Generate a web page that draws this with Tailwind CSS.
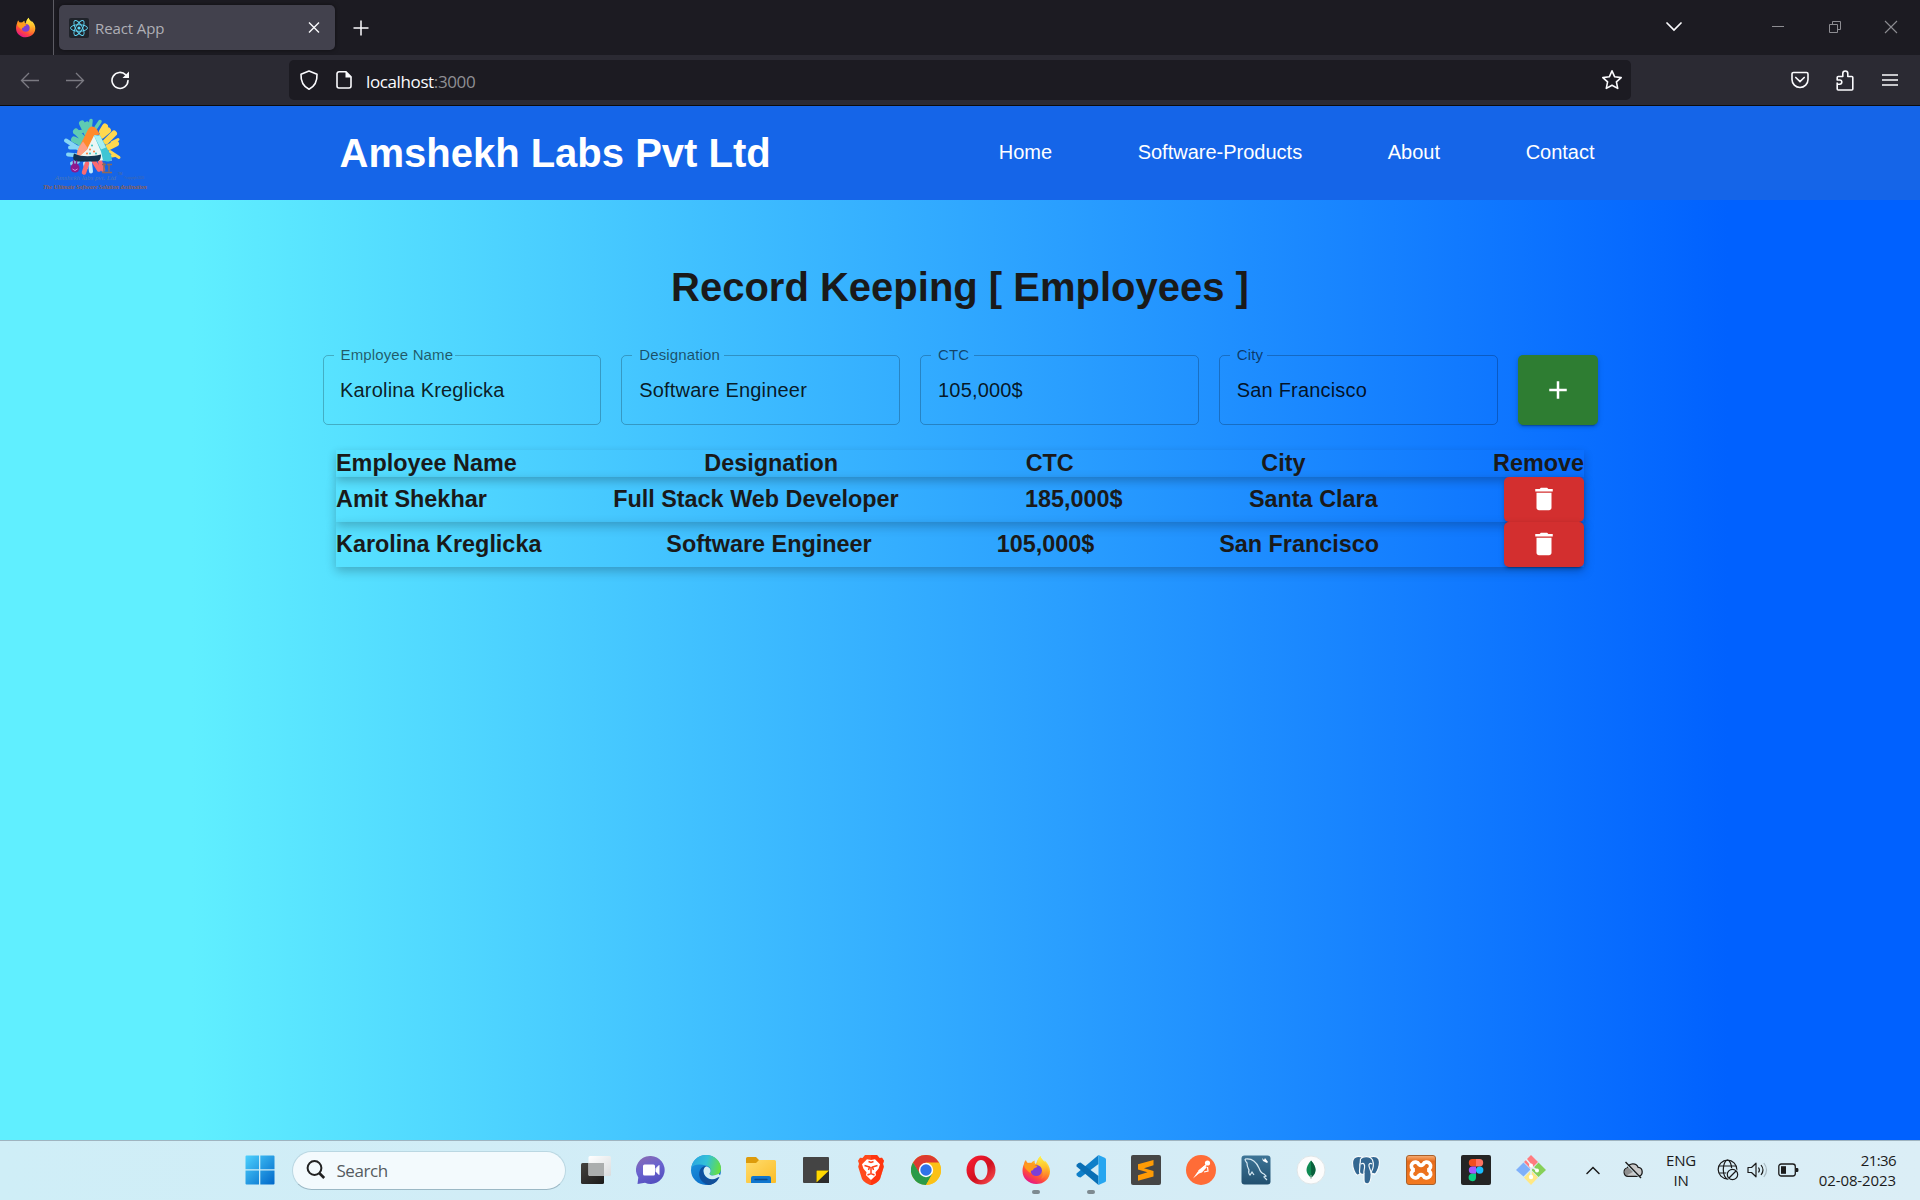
<!DOCTYPE html>
<html lang="en">
<head>
<meta charset="utf-8">
<title>React App</title>
<script src="https://cdn.jsdelivr.net/npm/@tailwindcss/browser@4"></script>
</head>
<body class="w-[1920px] h-[1200px] overflow-hidden flex flex-col font-['Liberation_Sans',Arial,sans-serif]">

<svg width="0" height="0" class="absolute" aria-hidden="true">
  <defs>
    <linearGradient id="ffBody" x1=".8" y1=".1" x2=".3" y2="1"><stop offset="0" stop-color="#fff44f"/><stop offset=".35" stop-color="#ffa21e"/><stop offset=".7" stop-color="#ff4a3d"/><stop offset="1" stop-color="#e3128c"/></linearGradient>
    <linearGradient id="ffFlame" x1=".5" y1="0" x2=".6" y2="1"><stop offset="0" stop-color="#fff04a"/><stop offset=".5" stop-color="#ffc12a"/><stop offset="1" stop-color="#ff6a33"/></linearGradient>
    <linearGradient id="win" x1="0" y1="0" x2="1" y2="1"><stop offset="0" stop-color="#4cd0fd"/><stop offset="1" stop-color="#0067c9"/></linearGradient>
    <linearGradient id="chat" x1=".1" y1="0" x2=".5" y2="1"><stop offset="0" stop-color="#8a6bb0"/><stop offset=".5" stop-color="#6a63cf"/><stop offset="1" stop-color="#5550c0"/></linearGradient>
    <linearGradient id="edgeTop" x1="0" y1=".3" x2="1" y2=".5"><stop offset="0" stop-color="#2aa5e0"/><stop offset=".5" stop-color="#33c1d8"/><stop offset="1" stop-color="#67e040"/></linearGradient>
    <linearGradient id="edgeLeft" x1="0" y1="0" x2=".6" y2="1"><stop offset="0" stop-color="#1f9ae0"/><stop offset="1" stop-color="#0a6cc8"/></linearGradient>
    <linearGradient id="folder" x1="0" y1="0" x2="1" y2="1"><stop offset="0" stop-color="#ffdc6e"/><stop offset="1" stop-color="#fbbd27"/></linearGradient>
    <linearGradient id="opera" x1="0" y1="0" x2="1" y2="1"><stop offset="0" stop-color="#ff1f35"/><stop offset=".55" stop-color="#d0101f"/><stop offset="1" stop-color="#ff5a5a"/></linearGradient>
    <linearGradient id="mysql" x1="0" y1="0" x2="0" y2="1"><stop offset="0" stop-color="#3e7597"/><stop offset="1" stop-color="#22506f"/></linearGradient>
    <linearGradient id="xampp" x1="0" y1="0" x2="0" y2="1"><stop offset="0" stop-color="#f8b078"/><stop offset=".2" stop-color="#e56b1b"/><stop offset="1" stop-color="#f47a20"/></linearGradient>
    <linearGradient id="dark" x1="0" y1="0" x2="1" y2="1"><stop offset="0" stop-color="#43423f"/><stop offset="1" stop-color="#1c1b1a"/></linearGradient>
    <linearGradient id="light" x1="0" y1="0" x2="1" y2="1"><stop offset="0" stop-color="#ffffff"/><stop offset="1" stop-color="#d9dcde"/></linearGradient>
    <symbol id="firefox" viewBox="0 0 30 30">
      <path d="M3.200 8.500C3.200 6.600 4.400 5.400 5 5c.3 1.400 1 2.300 2 3 .9-.4 2.500-.3 3.200 0 .8-1.300 2-2.200 3.600-2.600C13.300 7 13.800 8.400 15 9.200 16.200 6 17 3 19.600 1c0 2.400 2.200 4 3.800 6 .3-.6.3-1.200.2-1.800C27 8.500 29 12 29 16.200 29 24 22.800 29 15.300 29S1.500 23.500 1.500 16c0-3 .7-5.500 1.700-7.500z" fill="url(#ffBody)"/>
      <path d="M19.600 1c0 3.500 5.600 5 6.900 11.500.9 5-2 10-6.500 11.500 2-2.500 2.500-6 1-9-1.200-2.400-3.200-3.200-4.500-5.200C15.600 6.500 17.400 2.700 19.600 1z" fill="url(#ffFlame)"/>
      <circle cx="15.300" cy="15.500" r="5.600" fill="#7b3fd6"/>
      <path d="M3.500 8c2.500 1.500 5-.6 8.500.9 1.200.6 2 1.600 4.300 1.900.3 1.700-2.300 2-3.300 2.700-1 .8-.4 1.700-2 2-1.500.3-1.500 1-1 2.500-2.600-1-4-3-5.400-4.300C3 12 3 10 3.500 8z" fill="#ff9a1c"/>
    </symbol>
    <symbol id="trash" viewBox="0 0 24 24"><path d="M6 19c0 1.100.9 2 2 2h8c1.100 0 2-.9 2-2V7H6v12zM19 4h-3.500l-1-1h-5l-1 1H5v2h14V4z" fill="#fff"/></symbol>
  </defs>
</svg>

<!-- Tab strip -->
<header class="h-[55px] shrink-0 bg-[#1c1b22] flex items-center text-[#fbfbfe]">
  <div class="w-[54px] h-full border-r border-[#5c5b63] flex items-center justify-center pr-[3px] pb-px"><svg class="w-[21px] h-[21px]"><use href="#firefox"/></svg></div>
  <div class="ml-[5px] w-[276px] h-[45px] rounded-[5px] bg-[#42414d] shadow-[0_0_4px_rgba(0,0,0,.5)] flex items-center pl-2.5 pr-[15px]">
    <svg width="20" height="20" viewBox="0 0 20 20"><rect width="20" height="20" rx="2" fill="#20232a"/><g fill="none" stroke="#61dafb" stroke-width=".9"><ellipse cx="10" cy="10" rx="8.500" ry="3.300"/><ellipse cx="10" cy="10" rx="8.500" ry="3.300" transform="rotate(60 10 10)"/><ellipse cx="10" cy="10" rx="8.500" ry="3.300" transform="rotate(120 10 10)"/></g><circle cx="10" cy="10" r="1.600" fill="#61dafb"/></svg>
    <span class="ml-1.5 text-[15px] leading-5 text-[#afafb6] font-['Open_Sans',sans-serif] tracking-[-.1px]">React App</span>
    <svg class="ml-auto" width="12" height="12" viewBox="0 0 12 12"><path d="M1 .5l10 10M11 .5L1 10.500" stroke="#fbfbfe" stroke-width="1.400"/></svg>
  </div>
  <svg class="ml-[18px]" width="16" height="16" viewBox="0 0 16 16"><path d="M8 .5v15M.5 8h15" stroke="#fbfbfe" stroke-width="1.500"/></svg>
  <svg class="ml-[1297px] mb-[2px]" width="16" height="10" viewBox="0 0 16 10"><path d="M1 1l7 7 7-7" fill="none" stroke="#fbfbfe" stroke-width="1.700" stroke-linecap="round"/></svg>
  <svg class="ml-[90px] mb-px" width="12" height="12" viewBox="0 0 12 12"><path d="M0 5.500h12" stroke="#8d8d92"/></svg>
  <svg class="ml-[45px] mb-px" width="12" height="12" viewBox="0 0 12 12"><path d="M.5 3.500h8v8h-8zM3.500 3.500v-3h8v8h-3" fill="none" stroke="#8d8d92"/></svg>
  <svg class="ml-[43px] mb-px" width="14" height="14" viewBox="0 0 14 14"><path d="M1 1l12 12M13 1L1 13" stroke="#8d8d92" stroke-width="1.100"/></svg>
</header>

<!-- Toolbar -->
<div class="h-[51px] shrink-0 bg-[#2b2a33] border-b border-[#0c0c0d] flex items-center">
  <svg class="ml-5" width="20" height="18" viewBox="0 0 20 18"><path d="M19 9.500H2M9 2L1.500 9.500 9 17" fill="none" stroke="#7b7a82" stroke-width="1.300"/></svg>
  <svg class="ml-[25px]" width="20" height="18" viewBox="0 0 20 18"><path d="M1 9.500h17M11 2L18.500 9.500 11 17" fill="none" stroke="#7b7a82" stroke-width="1.300"/></svg>
  <svg class="ml-[25px]" width="20" height="20" viewBox="0 0 20 20"><path d="M15.800 4.900A8 8 0 1 0 18 10.600" fill="none" stroke="#fbfbfe" stroke-width="1.600" stroke-linecap="round"/><path d="M19 1.500v6.500h-6.500z" fill="#fbfbfe"/></svg>
  <div class="ml-[159px] w-[1342px] h-10 rounded-[5px] bg-[#1c1b22] flex items-center pl-[10px] pr-[8px]">
    <svg width="20" height="22" viewBox="0 0 20 22"><path d="M10 2l8 3.200c.3 6.500-2 12-8 15-6-3-8.300-8.500-8-15z" fill="none" stroke="#fbfbfe" stroke-width="1.600" stroke-linejoin="round"/></svg>
    <svg class="ml-[16px]" width="18" height="20" viewBox="0 0 18 20"><path d="M4 1.800h7l5 5V16a2 2 0 0 1-2 2H4a2 2 0 0 1-2-2V3.800a2 2 0 0 1 2-2z" fill="none" stroke="#fbfbfe" stroke-width="1.600"/><path d="M10.500 1.500v6h6z" fill="#fbfbfe"/></svg>
    <span class="ml-[13px] mt-[3px] text-[17px] leading-6 text-[#fbfbfe] font-['Open_Sans',sans-serif] tracking-[-.38px]">localhost<span class="text-[#8f8f94]">:3000</span></span>
    <svg class="ml-auto" width="22" height="22" viewBox="0 0 22 22"><path d="M11 1.800l2.700 6 6.500.8-4.800 4.300 1.300 6.500L11 16.200l-5.700 3.200 1.300-6.500L1.800 8.600l6.500-.8z" fill="none" stroke="#fbfbfe" stroke-width="1.600" stroke-linejoin="round"/></svg>
  </div>
  <svg class="ml-[160px]" width="18" height="18" viewBox="0 0 18 18"><path d="M2.500 1.500h13a1.500 1.500 0 0 1 1.500 1.500v5.500a8 8 0 0 1-16 0V3a1.500 1.500 0 0 1 1.500-1.500z" fill="none" stroke="#fbfbfe" stroke-width="1.600"/><path d="M4.800 6.500L9 10.500l4.200-4" fill="none" stroke="#fbfbfe" stroke-width="1.700" stroke-linecap="round"/></svg>
  <svg class="ml-[27px]" width="18" height="21" viewBox="0 0 18 21"><path d="M1.200 12.500V19a1 1 0 0 0 1 1h13.600a1 1 0 0 0 1-1V7.500a1 1 0 0 0-1-1h-4V3.500a2.500 2.500 0 0 0-5 0v3H2.200a1 1 0 0 0-1 1V10h2.500a2 2 0 0 1 0 4.200H1.200" fill="none" stroke="#fbfbfe" stroke-width="1.600" stroke-linejoin="round"/></svg>
  <svg class="ml-[28px] mb-px" width="16" height="14" viewBox="0 0 16 14"><path d="M0 2h16M0 7h16M0 12h16" stroke="#fbfbfe" stroke-width="1.500"/></svg>
</div>

<!-- Site navigation -->
<nav class="h-[94px] shrink-0 bg-[#1565e8] flex items-center pl-[30px] text-white">
  <svg width="130" height="94" viewBox="0 0 130 94">
    <g transform="translate(0 1.500)">
      <g stroke-linecap="round" fill="none">
        <path d="M56 38L44 32M54 32L46 24M58 28L52 16M62 25L57 17" stroke="#5fcbb2" stroke-width="6"/>
        <path d="M52 24L45 25M60 22L61 13M66 20L70 14" stroke="#5fcbb2" stroke-width="3.500"/>
        <path d="M72 28L78 23M76 34L84 26M72 24L75 19M78 40L86 36" stroke="#ffd84f" stroke-width="6"/>
        <path d="M80 44L89 50M82 35L88 32M78 49L85 48" stroke="#ffd84f" stroke-width="3"/>
        <path d="M50 42L36 33M49 48L38 47M50 40L40 40M48 54L42 56" stroke="#86d6f5" stroke-width="4"/>
        <path d="M60 55L61 64M55 56L56 60" stroke="#bdeaff" stroke-width="4"/>
        <path d="M64 54L69 62M70 54L73 62M57 56L54 65" stroke="#fb6b70" stroke-width="4.500"/>
      </g>
      <path d="M62 21l20 32H44z" fill="#eaf6f4"/>
      <path d="M58 22c2-4 6-4 9 0l3 5-6 1-7 14-9 8c-2-4 0-8 2-12z" fill="#ff8a2b"/>
      <path d="M48 50c-2-4 0-8 2-12l3-4 5 7z" fill="#ff9f86"/>
      <path d="M64 28h6l11 20c2 4 0 6-4 6l-4-1-2-9z" fill="#3fc5d4"/>
      <path d="M64 28h6l6 12-5 2z" fill="#a5eef2"/>
      <path d="M44 46c-2 6 0 8 4 8h18c4 0 5-3 5-7-8 2-19 3-27-1z" fill="#12344f"/>
      <g fill="#ff7a3c"><circle cx="60" cy="42" r="1"/><circle cx="64" cy="44" r="1"/><circle cx="57" cy="46" r="1"/></g>
      <g fill="#36c4c0"><circle cx="62" cy="38" r="1"/><circle cx="60" cy="46" r="1"/><circle cx="66" cy="46" r="1"/></g>
      <circle cx="45" cy="60.500" r="4.500" fill="#8c1a8d"/><path d="M43.500 53v5h3v-5" fill="none" stroke="#8c1a8d" stroke-width="1.500"/><path d="M42.500 61.500q2.500 3 5 0" fill="none" stroke="#e58ae5"/>
      <path d="M74 55v9M79 56v8M72 57h4M77 57h5M72 65h10" stroke="#8a6a5c" stroke-width="1.500"/>
    </g>
    <text x="25" y="73.500" font-size="7" textLength="61" lengthAdjust="spacingAndGlyphs" fill="#4d78b4" font-family="Liberation Serif, serif" font-style="italic">Amshekh labs pvt. Ltd</text>
    <text x="88" y="68.500" font-size="3" fill="#5c6c8c" font-family="Liberation Sans, sans-serif">TM</text>
    <text x="94" y="73" font-size="3.500" textLength="20" lengthAdjust="spacingAndGlyphs" fill="#4d69a0" font-family="Liberation Sans, sans-serif">©copyright 2023</text>
    <text x="13" y="82.500" font-size="7" textLength="104" lengthAdjust="spacingAndGlyphs" fill="#94604c" font-family="Liberation Serif, serif" font-style="italic" font-weight="bold">The Ultimate Software Solution destination</text>
  </svg>
  <h1 class="ml-[179.500px] text-[40px] leading-[46px] font-bold">Amshekh Labs Pvt Ltd</h1>
  <div class="ml-[228px] mb-[2px] flex gap-[85.600px] text-xl leading-6">
    <a>Home</a><a>Software-Products</a><a>About</a><a>Contact</a>
  </div>
</nav>

<!-- Employee records -->
<main class="flex-1 min-h-0 bg-[linear-gradient(90deg,#60efff_10%,#0061ff_90%)] flex flex-col items-center">
  <h2 class="mt-[64px] text-[40px] leading-[46px] font-bold text-[#1a1a1a]">Record Keeping [ Employees ]</h2>
  <form class="mt-[36px] w-[1275px] flex gap-5 text-xl text-black/87">
    <fieldset class="flex-1 h-[79px] border border-black/23 rounded-[5px] px-[10px] min-w-0"><legend class="pl-[7px] pr-[2px] text-[15px] leading-[18px] text-black/60 tracking-[.14px]">Employee Name</legend><div class="px-[6.500px] pt-[12px] leading-[29px] tracking-[.19px]">Karolina Kreglicka</div></fieldset>
    <fieldset class="flex-1 h-[79px] border border-black/23 rounded-[5px] px-[10px] min-w-0"><legend class="pl-[7px] pr-[4px] text-[15px] leading-[18px] text-black/60 tracking-[.14px]">Designation</legend><div class="px-[7px] pt-[12px] leading-[29px] tracking-[.19px]">Software Engineer</div></fieldset>
    <fieldset class="flex-1 h-[79px] border border-black/23 rounded-[5px] px-[10px] min-w-0"><legend class="pl-[7px] pr-[5px] text-[15px] leading-[18px] text-black/60 tracking-[.14px]">CTC</legend><div class="px-[7px] pt-[12px] leading-[29px] tracking-[.19px]">105,000$</div></fieldset>
    <fieldset class="flex-1 h-[79px] border border-black/23 rounded-[5px] px-[10px] min-w-0"><legend class="pl-[7px] pr-[4px] text-[15px] leading-[18px] text-black/60 tracking-[.14px]">City</legend><div class="px-[7px] pt-[12px] leading-[29px] tracking-[.19px]">San Francisco</div></fieldset>
    <button type="button" class="mt-[9px] w-20 h-[70px] rounded-[5px] bg-[#2e7d32] shadow-[0_4px_1px_-3px_rgba(0,0,0,.2),0_2px_3px_rgba(0,0,0,.14),0_1px_6px_rgba(0,0,0,.12)] flex items-center justify-center"><svg width="30" height="30" viewBox="0 0 24 24"><path d="M19 13h-6v6h-2v-6H5v-2h6V5h2v6h6v2z" fill="#fff"/></svg></button>
  </form>
  <section class="mt-[25px] w-[1248px] text-[23.4px] font-bold text-[#1a1a1a] leading-[27px]">
    <div class="h-[27px] flex items-center justify-between shadow-[0_4px_10px_rgba(0,0,0,.24)]"><h3>Employee Name</h3><h3>Designation</h3><h3>CTC</h3><h3>City</h3><h3>Remove</h3></div>
    <div class="h-[45px] flex items-center justify-between shadow-[0_4px_10px_rgba(0,0,0,.24)]"><h3>Amit Shekhar</h3><h3>Full Stack Web Developer</h3><h3>185,000$</h3><h3>Santa Clara</h3><button class="w-20 h-[45px] rounded-[5px] bg-[#d32f2f] shadow-[0_4px_1px_-3px_rgba(0,0,0,.2),0_2px_3px_rgba(0,0,0,.14),0_1px_6px_rgba(0,0,0,.12)] flex items-center justify-center pb-px"><svg class="w-[30px] h-[30px]"><use href="#trash"/></svg></button></div>
    <div class="h-[45px] flex items-center justify-between shadow-[0_4px_10px_rgba(0,0,0,.24)]"><h3>Karolina Kreglicka</h3><h3>Software Engineer</h3><h3>105,000$</h3><h3>San Francisco</h3><button class="w-20 h-[45px] rounded-[5px] bg-[#d32f2f] shadow-[0_4px_1px_-3px_rgba(0,0,0,.2),0_2px_3px_rgba(0,0,0,.14),0_1px_6px_rgba(0,0,0,.12)] flex items-center justify-center pb-px"><svg class="w-[30px] h-[30px]"><use href="#trash"/></svg></button></div>
  </section>
</main>

<!-- Taskbar -->
<footer class="h-[60px] shrink-0 border-t border-[#9fb4c0] bg-[linear-gradient(90deg,#cfeef7,#d3ecf6_50%,#dbeef6)] flex items-center pl-[244.500px] pb-px font-['Open_Sans',sans-serif] text-[#1b1b1b]">
  <svg width="30" height="30" viewBox="0 0 30 30"><path d="M1.500.5H14v13.700H.5V1.500a1 1 0 0 1 1-1zM15.300.5h13.200a1 1 0 0 1 1 1v12.700H15.300zM.5 15.500H14v14H1.500a1 1 0 0 1-1-1zM15.300 15.500h14.200v13a1 1 0 0 1-1 1H15.300z" fill="url(#win)"/></svg>
  <div class="ml-[17px] w-[274px] h-[39px] rounded-full bg-[#f3fafd] border border-[#bad7e2] border-b-[#9bb8c5] flex items-center pl-[13px]">
    <svg width="20" height="20" viewBox="0 0 20 20"><circle cx="8.500" cy="8" r="6.900" fill="none" stroke="#222" stroke-width="2"/><path d="M13.200 13l5 5" stroke="#222" stroke-width="2.600"/></svg>
    <span class="ml-[11px] mt-px text-[17px] leading-6 text-[#555b5f] tracking-[-.45px]">Search</span>
  </div>
  <div class="ml-[2.500px] grid grid-cols-[repeat(18,55px)] h-full items-center justify-items-center">
    <svg width="30" height="30" viewBox="0 0 30 30"><rect y="8" width="23" height="21" rx="1.500" fill="url(#dark)"/><rect x="7.500" y="1" width="22.500" height="20" rx="1.500" fill="url(#light)"/><path d="M7.500 8H23v13H9a1.500 1.500 0 0 1-1.500-1.500z" fill="#abaeae"/></svg>
    <svg width="30" height="30" viewBox="0 0 30 30"><path d="M15 1a14 14 0 1 1-6 26.800L1.500 29l.8-6.500A14 14 0 0 1 15 1z" fill="url(#chat)"/><rect x="7" y="9.500" width="12" height="11" rx="1.500" fill="#fff"/><path d="M20 13.500l3-3v9l-3-3z" fill="#fff" stroke="#fff" stroke-linejoin="round"/></svg>
    <svg width="30" height="30" viewBox="0 0 30 30"><circle cx="15" cy="15" r="15" fill="url(#edgeLeft)"/><path d="M.2 13C1.500 5 7.500 0 15 0c8.500 0 15 6 15 13.500 0 4.500-3 7-7 7-3.500 0-5-1-4-2.500 2-3 0-7-4.500-7.500C9 9 3 9 .2 13z" fill="url(#edgeTop)"/><path d="M9 15c-3 7 2 13 8 15 4 0 9-3 10.500-7C22 27 12 24 12.500 16c0-2 1.500-4 3-5-2-.5-5 1-6.500 4z" fill="#0d50a0"/><path d="M12.500 16c0-3 2-5 4-4.300 2 .6 3.500 2.500 3 4.800-.3 1.300-1.500 2-.7 3 1.500 1.700 5.800 1.200 8.700-.7l2 2-1.500 2.400C22 27 12.500 23 12.500 16z" fill="#d3edf5"/><path d="M12.500 16c0 7 6 9.500 11 8 2-.5 3.500-2 5-2-2 4.500-6 7.500-11 8-4-5-6-9-5-14z" fill="#12509a"/></svg>
    <svg width="30" height="30" viewBox="0 0 30 30"><path d="M0 3.500A1.500 1.500 0 0 1 1.500 2h8.500l3 3v4H0z" fill="#dd9b0c"/><path d="M0 8h10l3-3h15.500A1.500 1.500 0 0 1 30 6.500V27a1 1 0 0 1-1 1H1a1 1 0 0 1-1-1z" fill="url(#folder)"/><path d="M5 28v-5a2 2 0 0 1 2-2h16a2 2 0 0 1 2 2v5z" fill="#1076ce"/><path d="M9 24.500h12" stroke="#0a4a8c" stroke-width="1.300" stroke-linecap="round"/></svg>
    <svg width="30" height="30" viewBox="0 0 30 30"><path d="M3 2h24a1 1 0 0 1 1 1v12L15 28H3a1 1 0 0 1-1-1V3a1 1 0 0 1 1-1z" fill="#444"/><path d="M15 15h13v13H15z" fill="#2b2b2b"/><path d="M15.500 15.500H28L15.500 27.500z" fill="#ffd800"/></svg>
    <svg width="30" height="30" viewBox="0 0 30 30"><path d="M9 0h12l2.500 3 2.500-.3 2 3-1 3 .8 3L24 24q-1 2-4 4l-5 2.500L10 28q-3-2-4-4L2.200 11.700 3 8.700l-1-3 2-3 2.500.3z" fill="#ff4a1c"/><path d="M15 0h6l2.500 3 2.500-.3 2 3-1 3 .8 3L24 24q-1 2-4 4l-5 2.500z" fill="#ff2a08" opacity=".6"/><path d="M15 5l4-.7 5 5-1.500 4.500-3 3.500.5 3L15 25l-5-4.700.5-3-3-3.500L6 9.300l5-5z" fill="#fff"/><path d="M8.500 10.500l5 1.500-1 3M21.500 10.500l-5 1.500 1 3M15 12v7M11.500 20l3.500-1.500 3.500 1.500M12.500 6.500l2.500 1 2.500-1" fill="none" stroke="#ff3f16" stroke-width="1.500"/></svg>
    <svg width="30" height="30" viewBox="0 0 30 30"><circle cx="15" cy="15" r="15" fill="#fbc116"/><path d="M2 7.500A15 15 0 0 1 28 7.500L28.200 8H15l-6.500 11z" fill="#dd3a2f"/><path d="M2 7.500A15 15 0 0 0 15 30l6.200-11H15L8.800 18.500z" fill="#2a9a48"/><path d="M28 7.500H15l6.500 11.200L15 30A15 15 0 0 0 28 7.500z" fill="#fbc116"/><circle cx="15" cy="15" r="7.200" fill="#fff"/><circle cx="15" cy="15" r="5.700" fill="#2f73e8"/></svg>
    <svg width="30" height="30" viewBox="0 0 30 30"><path d="M15 .5a14.500 14.500 0 1 0 0 29 14.500 14.500 0 0 0 0-29zm0 4.500c4 0 6.500 4.500 6.500 10S19 25 15 25s-6.500-4.500-6.500-10S11 5 15 5z" fill="url(#opera)" fill-rule="evenodd"/></svg>
    <span class="relative h-full flex items-center"><svg class="w-[30px] h-[30px]"><use href="#firefox"/></svg><i class="absolute left-[11px] bottom-[5px] w-2 h-1 rounded-full bg-[#7d8a90]"></i></span>
    <span class="relative h-full flex items-center"><svg width="30" height="30" viewBox="0 0 30 30"><path d="M22.500 0v9L4.500 22.500 2.500 22 .5 20.300V18.500z" fill="#0f7fc9"/><path d="M22.500 30v-9L4.500 7.500 2.500 8 .5 9.700v1.800z" fill="#0a6fb5"/><path d="M22.500 0l6.200 2.800a2 2 0 0 1 1.300 1.900v20.600a2 2 0 0 1-1.300 1.900L22.500 30z" fill="#27a6f0"/></svg><i class="absolute left-[11px] bottom-[5px] w-2 h-1 rounded-full bg-[#7d8a90]"></i></span>
    <svg width="30" height="30" viewBox="0 0 30 30"><rect width="30" height="30" rx="2" fill="#464646"/><path d="M22.500 5v5.300L13 13.300l9.500 2.800v5.400L7 25.800v-5.500l9.500-3L7 14.500V9.300z" fill="#ff9b05"/></svg>
    <svg width="30" height="30" viewBox="0 0 30 30"><circle cx="15" cy="15" r="15" fill="#ff6c37"/><circle cx="21.500" cy="8" r="2.600" fill="#fff"/><path d="M18.500 10.500l2.500 1.500-5 5.500-3 1-6 5 4.500-6.500z" fill="#fff"/><path d="M20 10l-7.500 6M21.500 12l.5 4-4 1" fill="none" stroke="#fff" stroke-width="1.200"/></svg>
    <svg width="30" height="30" viewBox="0 0 30 30"><rect x=".5" y=".5" width="29" height="29" rx="3" fill="url(#mysql)"/><path d="M4 4c6-1 11 2 14 9 1 3 2 5 5 6l2 2-2 1 3 3M4 4c0 2 1 3 2 4 0 4 1 5 2 7-1 3 0 4 1 5l2-3 2 3" fill="none" stroke="#d6e8f2" stroke-width="1.200"/><path d="M21 3l2 2 1-2 3 4-1 1-4-2z" fill="#fff"/></svg>
    <svg width="30" height="30" viewBox="0 0 30 30"><circle cx="15" cy="15" r="14" fill="#fcfcfc" stroke="#dfe6e8"/><path d="M15 5.500c3 3.500 4.500 6.500 4.500 9.500 0 3.500-2 5.500-4.200 7.500h-.6c-2.200-2-4.200-4-4.200-7.500 0-3 1.500-6 4.500-9.500z" fill="#0f8a52"/><path d="M15 5.500c3 3.500 4.500 6.500 4.500 9.500 0 3.500-2 5.500-4.200 7.500z" fill="#0a5f3c"/><path d="M15 20v4" stroke="#a9b8b0"/></svg>
    <svg width="30" height="30" viewBox="0 0 30 30"><g stroke="#f5fafc" stroke-width="1.200"><path d="M11 2C6 .5 1.500 2 1.500 8c0 5 2.500 11 4.500 12 2 .6 3-1 4-2.500L9 10z" fill="#336791"/><path d="M19 2c5-1.500 9.500 0 9.500 5 0 4.500-2.500 10-4.500 12.500l-4-.5z" fill="#336791"/><path d="M9.500 4C12 .7 19 .5 21.500 5c1.500 4 .5 9-1.200 12-.3 4 .2 10-2.800 11.500-3 1-4.500-.5-4.500-3.500v-6c-3 1-4.800-.5-4.500-3z" fill="#336791"/><path d="M10 9c3-2 4 1 3.500 4s-1 4-.5 6M21 9c-2-1.500-3.500 0-3 2 .5 3 2 4 2 7l4 1" fill="none"/></g></svg>
    <svg width="30" height="30" viewBox="0 0 30 30"><rect x=".5" y=".5" width="29" height="29" rx="2.500" fill="url(#xampp)" stroke="#a9602a"/><path d="M8.500 15A4 4 0 1 1 13 9.500q2 1.500 4 0A4 4 0 1 1 21.500 15 4 4 0 1 1 17 20.500q-2-1.500-4 0A4 4 0 1 1 8.500 15z" fill="none" stroke="#fff" stroke-width="3.700"/></svg>
    <svg width="30" height="30" viewBox="0 0 30 30"><rect width="30" height="30" rx="2" fill="#242424"/><path d="M15 4h-3.500a3.700 3.700 0 0 0 0 7.400H15z" fill="#f24e1e"/><path d="M15 4h3.500a3.700 3.700 0 0 1 0 7.400H15z" fill="#ff7262"/><path d="M15 11.400h-3.500a3.700 3.700 0 0 0 0 7.400H15z" fill="#a259ff"/><circle cx="18.700" cy="15.100" r="3.700" fill="#1abcfe"/><path d="M15 18.800h-3.500a3.700 3.700 0 1 0 3.500 3.700z" fill="#0acf83"/></svg>
    <svg width="30" height="30" viewBox="0 0 30 30"><path d="M15 0l7 7-7 7-7-7z" fill="#ff7c80"/><path d="M7.500 7.500l7 7-7 7L0 15z" fill="#7fb0fa"/><path d="M22.500 7.500L30 15l-7.500 7-7-7z" fill="#86d058"/><path d="M15 15.500l7 7-7 7.500-7-7.500z" fill="#ffe884"/><path d="M10 4l5 6v12M15 11l6 4.500" fill="none" stroke="#e5f3f6" stroke-width="1.600"/><g fill="#fff"><circle cx="15" cy="10.500" r="2"/><circle cx="15" cy="22" r="2.200"/><circle cx="21" cy="15.500" r="2"/></g></svg>
  </div>
  <svg class="ml-[28px]" width="14" height="9" viewBox="0 0 14 9"><path d="M1 7.500l6-6 6 6" fill="none" stroke="#1b1b1b" stroke-width="1.500" stroke-linecap="round"/></svg>
  <svg class="ml-[23px]" width="20" height="18" viewBox="0 0 20 18"><path d="M5 15.300a4.200 4.200 0 0 1-.5-8.300 5.700 5.700 0 0 1 10.700-.6 4.500 4.500 0 0 1 .3 8.900z" fill="#c9c9c9" stroke="#1b1b1b" stroke-width="1.300"/><path d="M4.500 7c3-.5 5 1 7 3l-8 4.500C.5 12 1 8 4.500 7z" fill="#8f8f8f"/><path d="M2 2l16 16" stroke="#d8eef6" stroke-width="1.200"/><path d="M2.500 1L18 17" stroke="#1b1b1b" stroke-width="1.400"/></svg>
  <div class="ml-[23px] w-[30px] text-[15px] leading-5 flex flex-col items-center tracking-[-.2px]"><span>ENG</span><span>IN</span></div>
  <svg class="ml-[21px]" width="22" height="22" viewBox="0 0 22 22"><g fill="none" stroke="#1b1b1b" stroke-width="1.200"><circle cx="10.500" cy="10.500" r="9.300"/><ellipse cx="10.500" cy="10.500" rx="4.200" ry="9.300"/><path d="M2 7h17M2 14h9"/></g><circle cx="15.500" cy="15.500" r="6.500" fill="#d9eef6"/><circle cx="15.500" cy="15.500" r="5.200" fill="none" stroke="#1b1b1b" stroke-width="1.200"/><path d="M12 19l7-7" stroke="#1b1b1b" stroke-width="1.200"/></svg>
  <svg class="ml-[8px]" width="22" height="18" viewBox="0 0 22 18"><path d="M1 6.500h3.500L9 2.200v13.600L4.500 11.500H1z" fill="none" stroke="#1b1b1b" stroke-width="1.200" stroke-linejoin="round"/><path d="M11.500 6.500q1.800 2.500 0 5M14 4q4 5 0 10" fill="none" stroke="#1b1b1b" stroke-width="1.200"/><path d="M16.800 2q5.500 7 0 14" fill="none" stroke="#a9b9c0" stroke-width="1.200"/></svg>
  <svg class="ml-[9px]" width="21" height="14" viewBox="0 0 21 14"><rect x=".8" y="1" width="16.500" height="12" rx="2.500" fill="none" stroke="#1b1b1b" stroke-width="1.300"/><rect x="3" y="3.200" width="5" height="7.600" fill="#1b1b1b"/><path d="M18 5h1.500q1 0 1 2t-1 2H18z" fill="#1b1b1b"/></svg>
  <div class="ml-auto mr-[24px] text-[15px] leading-5 flex flex-col items-end tracking-[-.1px]"><span class="tracking-[-.6px]">21:36</span><span>02-08-2023</span></div>
</footer>
</body>
</html>
